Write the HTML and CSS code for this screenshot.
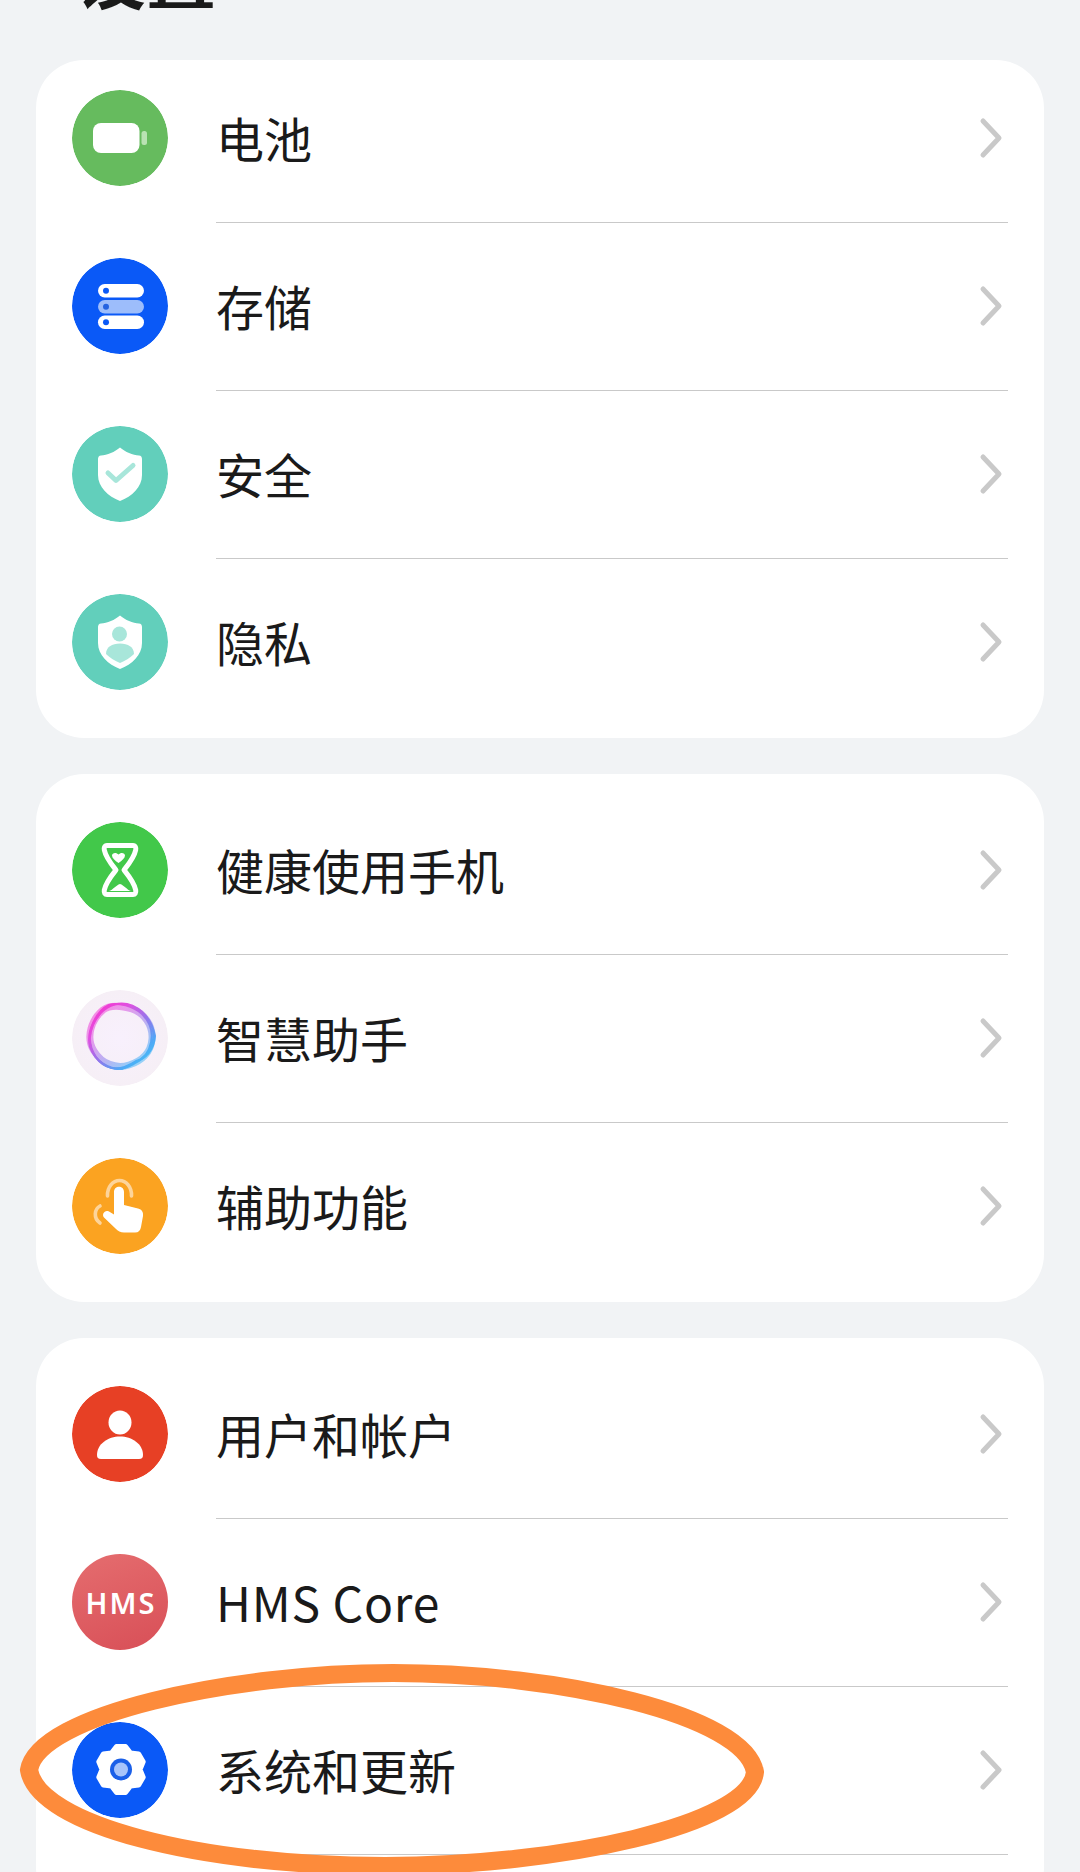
FILE: index.html
```html
<!DOCTYPE html>
<html lang="zh-CN">
<head>
  <meta charset="UTF-8">
  <meta name="viewport" content="width=device-width, initial-scale=1.0">
  <title>设置</title>
  <link rel="stylesheet" href="styles.css">
</head>
<body>
  <svg class="defs" width="0" height="0">
    <symbol id="chevron" viewBox="0 0 30 44">
      <path d="M5 5 L21 22 L5 39" fill="none" stroke="#c9c9c9" stroke-width="5" stroke-linecap="round" stroke-linejoin="round"/>
    </symbol>
    <symbol id="shield" viewBox="0 0 96 96">
      <path d="M48 21.5 C53 26 61 29 67 29.5 C69 29.7 70 31 70 33 V49 C70 61 60 70.5 48 75 C36 70.5 26 61 26 49 V33 C26 31 27 29.7 29 29.5 C35 29 43 26 48 21.5 Z" fill="#fff"/>
    </symbol>
    <linearGradient id="ring-grad" gradientUnits="userSpaceOnUse" x1="22" y1="18" x2="74" y2="78">
      <stop offset="0" stop-color="#f536cf"/>
      <stop offset="0.25" stop-color="#e04fe0"/>
      <stop offset="0.55" stop-color="#8f78ec"/>
      <stop offset="0.8" stop-color="#4fa8f6"/>
      <stop offset="1" stop-color="#45c4f5"/>
    </linearGradient>
    <radialGradient id="ring-bg" cx="0.5" cy="0.5" r="0.5">
      <stop offset="0" stop-color="#f8f0fd"/>
      <stop offset="1" stop-color="#f6eff6"/>
    </radialGradient>
    <filter id="soft" x="-10%" y="-10%" width="120%" height="120%">
      <feGaussianBlur stdDeviation="0.7"/>
    </filter>
  </svg>

  <h1 class="title">设置</h1>

  <section class="card card-top">
    <div class="row">
      <svg class="icon" viewBox="0 0 96 96">
        <circle cx="48" cy="48" r="48" fill="#66bb5e"/>
        <rect x="21" y="33" width="46.5" height="30" rx="8" fill="#fff"/>
        <rect x="69.5" y="41" width="5.5" height="14" rx="2.5" fill="#b9e2b3"/>
      </svg>
      <span class="label">电池</span>
      <svg class="chevron"><use href="#chevron"/></svg>
    </div>
    <div class="divider"></div>
    <div class="row">
      <svg class="icon" viewBox="0 0 96 96">
        <circle cx="48" cy="48" r="48" fill="#0a59f7"/>
        <rect x="26" y="26" width="46" height="13.5" rx="6.7" fill="#fff"/>
        <rect x="26" y="42" width="46" height="13.5" rx="6.7" fill="#9dbdfb"/>
        <rect x="26" y="57.5" width="46" height="13.5" rx="6.7" fill="#fff"/>
        <circle cx="34" cy="32.7" r="3" fill="#0a59f7"/>
        <circle cx="34" cy="48.7" r="3" fill="#2563e0"/>
        <circle cx="34" cy="64.2" r="3" fill="#0a59f7"/>
      </svg>
      <span class="label">存储</span>
      <svg class="chevron"><use href="#chevron"/></svg>
    </div>
    <div class="divider"></div>
    <div class="row">
      <svg class="icon" viewBox="0 0 96 96">
        <circle cx="48" cy="48" r="48" fill="#62cfbb"/>
        <use href="#shield"/>
        <path d="M36 47 L44 54.5 L61 39.5" fill="none" stroke="#a8e6da" stroke-width="5" stroke-linecap="round" stroke-linejoin="round"/>
      </svg>
      <span class="label">安全</span>
      <svg class="chevron"><use href="#chevron"/></svg>
    </div>
    <div class="divider"></div>
    <div class="row">
      <svg class="icon" viewBox="0 0 96 96">
        <circle cx="48" cy="48" r="48" fill="#62cfbb"/>
        <use href="#shield"/>
        <circle cx="47.5" cy="40" r="7.5" fill="#a8e6da"/>
        <path d="M34 60 C34 53 40 49.5 48 49.5 C56 49.5 62 53 62 60 C58 64 53 67 48 69 C43 67 38 64 34 60 Z" fill="#a8e6da"/>
      </svg>
      <span class="label">隐私</span>
      <svg class="chevron"><use href="#chevron"/></svg>
    </div>
  </section>

  <section class="card">
    <div class="row">
      <svg class="icon" viewBox="0 0 96 96">
        <circle cx="48" cy="48" r="48" fill="#42c84a"/>
        <path d="M35 23.5 H61 C63.5 23.5 64.2 26 63.7 28 C62 36 56 43 52 48 C56 53 62 60 63.7 68 C64.2 71 63 72.5 61 72.5 H35 C33 72.5 31.8 71 32.3 68 C34 60 40 53 44 48 C40 43 34 36 32.3 28 C31.8 26 32.5 23.5 35 23.5 Z" fill="none" stroke="#fff" stroke-width="5" stroke-linejoin="round"/>
        <path d="M46.5 41 C43 38.5 40 36 40 33.5 C40 30.5 44.5 30 46.5 32.5 C48.5 30 53 30.5 53 33.5 C53 36 50 38.5 46.5 41 Z" fill="#fff"/>
        <path d="M37 69 C41 68 44 63 48 62 C52 63 55 68 59 69 Z" fill="#fff"/>
      </svg>
      <span class="label">健康使用手机</span>
      <svg class="chevron"><use href="#chevron"/></svg>
    </div>
    <div class="divider"></div>
    <div class="row">
      <svg class="icon" viewBox="0 0 96 96">
        <circle cx="48" cy="48" r="48" fill="url(#ring-bg)"/>
        <g fill="none" stroke="url(#ring-grad)" filter="url(#soft)">
          <path stroke-width="7" opacity="0.55" d="M31 20 C39 14 50 16 60 19 C72 23 81 35 80 49 C79 62 70 71 57 75 C44 79 30 74 22 61 C13 47 20 29 31 20 Z"/>
          <path stroke-width="2" d="M27 25 C34 13 48 11 63 18 C76 25 85 38 80 54 C76 67 68 70 60 75 C46 83 32 78 24 67 C15 54 16 38 27 25 Z"/>
          <path stroke-width="2" d="M21 35 C27 20 42 11 55 14 C71 18 80 31 83 46 C82 61 73 69 64 71 C52 79 38 82 27 71 C16 60 16 46 21 35 Z"/>
          <path stroke-width="2" d="M37 15 C46 12 61 16 70 24 C78 32 83 44 77 59 C72 71 60 73 50 79 C36 79 23 71 18 57 C14 42 24 21 37 15 Z"/>
        </g>
      </svg>
      <span class="label">智慧助手</span>
      <svg class="chevron"><use href="#chevron"/></svg>
    </div>
    <div class="divider"></div>
    <div class="row">
      <svg class="icon" viewBox="0 0 96 96">
        <circle cx="48" cy="48" r="48" fill="#fba321"/>
        <path d="M42 34 C42 27 52 27 52 34 V47 L66 50.5 C70 51.5 71.5 54 71 58 L69 69 C68.5 72.5 66.5 74.5 63 74.5 H52 C48.5 74.5 46 73 43.5 70.5 L32 59.5 C29.5 56.5 32.5 51.5 37 53.5 L42 56.5 Z" fill="#fff"/>
        <path d="M35.5 38 C35 29 41 22.5 47.5 22.5 C54 22.5 60 29 59.5 38" fill="none" stroke="#fdd49a" stroke-width="3.6" stroke-linecap="round"/>
        <path d="M28 48 C22.5 51 21 60 28 65" fill="none" stroke="#fdd49a" stroke-width="3.6" stroke-linecap="round"/>
      </svg>
      <span class="label">辅助功能</span>
      <svg class="chevron"><use href="#chevron"/></svg>
    </div>
  </section>

  <section class="card card-last">
    <div class="row">
      <svg class="icon" viewBox="0 0 96 96">
        <circle cx="48" cy="48" r="48" fill="#e74025"/>
        <ellipse cx="48" cy="36.5" rx="11.5" ry="12" fill="#fff"/>
        <path d="M25 69 C25 58 36 50.5 48 50.5 C60 50.5 71 58 71 69 C71 71.5 70 73 67 73 H29 C26 73 25 71.5 25 69 Z" fill="#fff"/>
      </svg>
      <span class="label">用户和帐户</span>
      <svg class="chevron"><use href="#chevron"/></svg>
    </div>
    <div class="divider"></div>
    <div class="row">
      <div class="icon hms">
        <span class="hms-text">HMS</span>
      </div>
      <span class="label label-latin">HMS Core</span>
      <svg class="chevron"><use href="#chevron"/></svg>
    </div>
    <div class="divider"></div>
    <div class="row">
      <svg class="icon" viewBox="0 0 96 96">
        <circle cx="48" cy="48" r="48" fill="#0a59f7"/>
        <path d="M44.5 24.4 H53.5 L58.5 31 L66.7 32.1 L71.2 39.8 L68 47.5 L71.2 55.2 L66.7 62.9 L58.5 64 L53.5 70.6 H44.5 L39.5 64 L31.3 62.9 L26.8 55.2 L30 47.5 L26.8 39.8 L31.3 32.1 L39.5 31 Z" fill="#fff" stroke="#fff" stroke-width="5" stroke-linejoin="round"/>
        <circle cx="49" cy="47.5" r="11" fill="#1a5fe8"/>
        <circle cx="49" cy="47.5" r="7" fill="#a8c4fa"/>
      </svg>
      <span class="label">系统和更新</span>
      <svg class="chevron"><use href="#chevron"/></svg>
    </div>
    <div class="divider"></div>
  </section>

  <!-- hand-drawn marker around the highlighted row -->
  <svg class="marker" viewBox="0 0 1080 1872">
    <path d="M29 1770 C38 1715 230 1673 393 1673 C560 1673 745 1715 755 1772 C750 1825 560 1866 385 1866 C200 1866 38 1825 29 1770 Z" fill="none" stroke="#fd8b3b" stroke-width="18"/>
  </svg>
</body>
</html>
```

FILE: styles.css
```css
html, body {
  margin: 0;
  height: 1872px;
  overflow: hidden;
}
body {
  position: relative;
  background: #f1f3f5;
  font-family: "Noto Sans CJK SC", "Noto Sans", sans-serif;
  color: #1a1a1a;
}
.defs {
  position: absolute;
}
.title {
  margin: -76px 0 0 76px;
  height: 100px;
  font-size: 70px;
  line-height: 100px;
  font-weight: 700;
  color: #1a1a1a;
}
.card {
  margin: 36px 36px 0;
  padding-top: 13px;
  padding-bottom: 12px;
  background: #fff;
  border-radius: 48px;
}
.card-top {
  padding-top: 0;
}
.card-top .row:first-child {
  padding-top: 30px;
}
.card-last {
  padding-bottom: 60px;
}
.row {
  display: flex;
  align-items: center;
  padding: 35px 36px 36px;
}
.icon {
  flex: none;
  width: 96px;
  height: 96px;
  border-radius: 50%;
}
.label {
  margin-left: 48px;
  padding-bottom: 3px;
  font-size: 48px;
  line-height: 60px;
}
.label-latin {
  letter-spacing: 0.8px;
}
.chevron {
  flex: none;
  width: 30px;
  height: 44px;
  margin-left: auto;
}
.divider {
  height: 1px;
  margin: 0 36px 0 180px;
  background: #c9c9c9;
}
.hms {
  display: flex;
  align-items: center;
  justify-content: center;
  background: linear-gradient(160deg, #e56d6f, #d84f57);
}
.hms-text {
  font-family: "Noto Sans", sans-serif;
  font-size: 29px;
  font-weight: 600;
  letter-spacing: 2px;
  margin-right: -2px;
  color: #fff;
}
.marker {
  position: absolute;
  left: 0;
  top: 0;
  width: 1080px;
  height: 1872px;
  pointer-events: none;
}
```
